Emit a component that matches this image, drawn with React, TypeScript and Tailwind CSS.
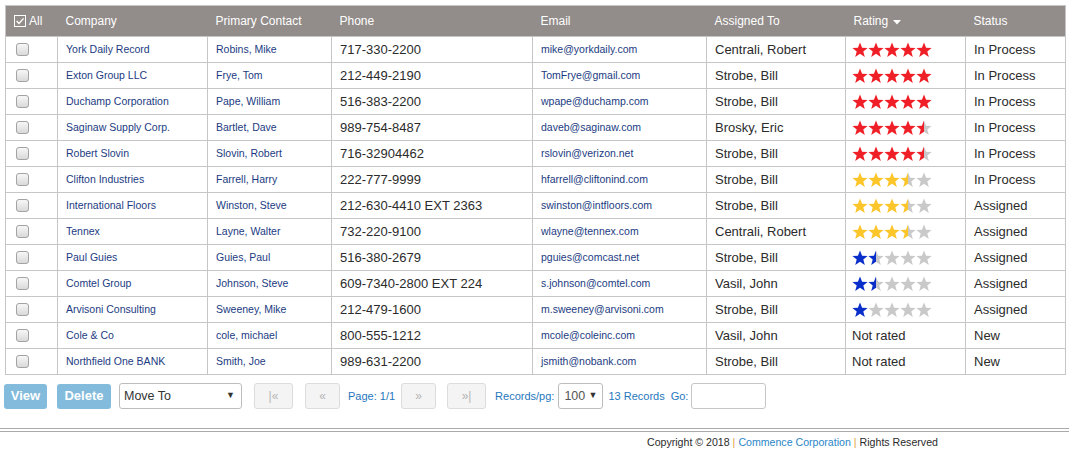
import React, { useId } from "react";

type Row = {
  company: string;
  contact: string;
  phone: string;
  email: string;
  assigned: string;
  rating: number | null;
  color: string;
  status: string;
};

const RED = "#ee1f26";
const YEL = "#fcc52a";
const BLU = "#0a2ec9";

const rows: Row[] = [
  { company: "York Daily Record", contact: "Robins, Mike", phone: "717-330-2200", email: "mike@yorkdaily.com", assigned: "Centrali, Robert", rating: 5, color: RED, status: "In Process" },
  { company: "Exton Group LLC", contact: "Frye, Tom", phone: "212-449-2190", email: "TomFrye@gmail.com", assigned: "Strobe, Bill", rating: 5, color: RED, status: "In Process" },
  { company: "Duchamp Corporation", contact: "Pape, William", phone: "516-383-2200", email: "wpape@duchamp.com", assigned: "Strobe, Bill", rating: 5, color: RED, status: "In Process" },
  { company: "Saginaw Supply Corp.", contact: "Bartlet, Dave", phone: "989-754-8487", email: "daveb@saginaw.com", assigned: "Brosky, Eric", rating: 4.5, color: RED, status: "In Process" },
  { company: "Robert Slovin", contact: "Slovin, Robert", phone: "716-32904462", email: "rslovin@verizon.net", assigned: "Strobe, Bill", rating: 4.5, color: RED, status: "In Process" },
  { company: "Clifton Industries", contact: "Farrell, Harry", phone: "222-777-9999", email: "hfarrell@cliftonind.com", assigned: "Strobe, Bill", rating: 3.5, color: YEL, status: "In Process" },
  { company: "International Floors", contact: "Winston, Steve", phone: "212-630-4410 EXT 2363", email: "swinston@intfloors.com", assigned: "Strobe, Bill", rating: 3.5, color: YEL, status: "Assigned" },
  { company: "Tennex", contact: "Layne, Walter", phone: "732-220-9100", email: "wlayne@tennex.com", assigned: "Centrali, Robert", rating: 3.5, color: YEL, status: "Assigned" },
  { company: "Paul Guies", contact: "Guies, Paul", phone: "516-380-2679", email: "pguies@comcast.net", assigned: "Strobe, Bill", rating: 1.5, color: BLU, status: "Assigned" },
  { company: "Comtel Group", contact: "Johnson, Steve", phone: "609-7340-2800 EXT 224", email: "s.johnson@comtel.com", assigned: "Vasil, John", rating: 1.5, color: BLU, status: "Assigned" },
  { company: "Arvisoni Consulting", contact: "Sweeney, Mike", phone: "212-479-1600", email: "m.sweeney@arvisoni.com", assigned: "Strobe, Bill", rating: 1, color: BLU, status: "Assigned" },
  { company: "Cole & Co", contact: "cole, michael", phone: "800-555-1212", email: "mcole@coleinc.com", assigned: "Vasil, John", rating: null, color: RED, status: "New" },
  { company: "Northfield One BANK", contact: "Smith, Joe", phone: "989-631-2200", email: "jsmith@nobank.com", assigned: "Strobe, Bill", rating: null, color: RED, status: "New" },
];

const STAR = "8,0.6 10.1,5.7 15.6,5.9 11.3,9.4 12.8,14.9 8,11.8 3.2,14.9 4.7,9.4 0.4,5.9 5.9,5.7";

function Star({ fill, color }: { fill: number; color: string }) {
  const id = useId().replace(/:/g, "");
  const pct = `${fill * 100}%`;
  return (
    <svg width="16" height="16" viewBox="0 0 16 16" className="block">
      <defs>
        <linearGradient id={id} x1="0" x2="1" y1="0" y2="0">
          <stop offset={pct} stopColor={color} />
          <stop offset={pct} stopColor="#c9c9c9" />
        </linearGradient>
      </defs>
      <polygon points={STAR} fill={`url(#${id})`} />
    </svg>
  );
}

function Stars({ rating, color }: { rating: number; color: string }) {
  return (
    <div className="flex">
      {[0, 1, 2, 3, 4].map((i) => (
        <Star key={i} fill={Math.max(0, Math.min(1, rating - i))} color={color} />
      ))}
    </div>
  );
}

function Box() {
  return (
    <div className="w-[13px] h-[13px] rounded-[3px] border border-[#a3a3a3] bg-gradient-to-b from-[#f7f7f7] to-[#d9d9d9]" />
  );
}

const th = "text-left font-normal text-white text-[12px] px-[8px] h-[31px] align-middle";
const td = "border border-[#c6c6c6] px-[8px] h-[26px] align-middle whitespace-nowrap";
const link = "text-[10.5px] text-[#1b3b82]";
const plain = "text-[13px] text-[#2b2b2b]";

export default function App() {
  return (
    <div className="w-[1069px] h-[460px] bg-white overflow-hidden" style={{ fontFamily: '"Liberation Sans", Arial, sans-serif' }}>
      <div className="pt-[5px] pl-[5px]">
        <table className="table-fixed border-collapse w-[1060px] border border-[#c6c6c6]">
          <colgroup>
            <col className="w-[52px]" />
            <col className="w-[150px]" />
            <col className="w-[124px]" />
            <col className="w-[201px]" />
            <col className="w-[174px]" />
            <col className="w-[139px]" />
            <col className="w-[120px]" />
            <col className="w-[100px]" />
          </colgroup>
          <thead>
            <tr className="bg-[#928c8a]">
              <th className={th + " pl-[8px]"}>
                <div className="flex items-center gap-[3px]">
                  <svg width="12" height="12" viewBox="0 0 12 12" className="block">
                    <rect x="0.5" y="0.5" width="11" height="11" fill="none" stroke="#fff" />
                    <path d="M2.6 6 L5 8.4 L9.6 3.4" fill="none" stroke="#fff" strokeWidth="1.4" />
                  </svg>
                  <span>All</span>
                </div>
              </th>
              <th className={th}>Company</th>
              <th className={th}>Primary Contact</th>
              <th className={th}>Phone</th>
              <th className={th}>Email</th>
              <th className={th}>Assigned To</th>
              <th className={th}>
                <div className="flex items-center gap-[5px]">
                  <span>Rating</span>
                  <svg width="8" height="5" viewBox="0 0 8 5" className="block mt-[2px]">
                    <polygon points="0,0 8,0 4,4.5" fill="#fff" />
                  </svg>
                </div>
              </th>
              <th className={th}>Status</th>
            </tr>
          </thead>
          <tbody>
            {rows.map((r, i) => (
              <tr key={i}>
                <td className={td + " pl-[10px]"}>
                  <Box />
                </td>
                <td className={td + " " + link}>{r.company}</td>
                <td className={td + " " + link}>{r.contact}</td>
                <td className={td + " " + plain}>{r.phone}</td>
                <td className={td + " " + link}>{r.email}</td>
                <td className={td + " " + plain}>{r.assigned}</td>
                <td className={td + " pl-[6px] " + plain}>
                  {r.rating === null ? <span>Not rated</span> : <Stars rating={r.rating} color={r.color} />}
                </td>
                <td className={td + " " + plain}>{r.status}</td>
              </tr>
            ))}
          </tbody>
        </table>
      </div>

      <div className="flex items-center h-[26px] mt-[8px] pl-[4px] text-[11px]">
        <button className="h-[25px] w-[43px] rounded-[3px] bg-[#82bbdb] text-white text-[13px] font-bold">View</button>
        <button className="h-[25px] w-[54px] ml-[10px] rounded-[3px] bg-[#82bbdb] text-white text-[13px] font-bold">Delete</button>
        <div className="h-[26px] w-[123px] ml-[8px] rounded-[3px] border border-[#bdbdbd] bg-white flex items-center justify-between pl-[4px] pr-[6px]">
          <span className="text-[12.5px] text-[#333]">Move To</span>
          <span className="text-[9px] text-[#333]">▼</span>
        </div>
        <div className="h-[26px] w-[39px] ml-[12px] rounded-[3px] border border-[#dcdcdc] bg-[#f4f4f4] flex items-center justify-center text-[#b4b4b4] text-[12px]">|«</div>
        <div className="h-[26px] w-[35px] ml-[12px] rounded-[3px] border border-[#dcdcdc] bg-[#f4f4f4] flex items-center justify-center text-[#b4b4b4] text-[12px]">«</div>
        <span className="ml-[8px] text-[#1f77bd]">Page: 1/1</span>
        <div className="h-[26px] w-[35px] ml-[6px] rounded-[3px] border border-[#dcdcdc] bg-[#f4f4f4] flex items-center justify-center text-[#b4b4b4] text-[12px]">»</div>
        <div className="h-[26px] w-[39px] ml-[11px] rounded-[3px] border border-[#dcdcdc] bg-[#f4f4f4] flex items-center justify-center text-[#b4b4b4] text-[12px]">»|</div>
        <span className="ml-[9px] text-[#1f77bd]">Records/pg:</span>
        <div className="h-[26px] w-[45px] ml-[4px] rounded-[3px] border border-[#bdbdbd] bg-white flex items-center justify-between pl-[5px] pr-[5px]">
          <span className="text-[12.5px] text-[#555]">100</span>
          <span className="text-[9px] text-[#333]">▼</span>
        </div>
        <span className="ml-[5px] text-[#1f77bd]">13 Records</span>
        <span className="ml-[6px] text-[#1f77bd]">Go:</span>
        <div className="h-[26px] w-[75px] ml-[3px] rounded-[3px] border border-[#c6c6c6] bg-white" />
      </div>

      <div className="mt-[19px] h-[4px] border-t border-b border-[#aaaaaa]" />
      <div className="flex pl-[647px] pt-[3px] text-[10.6px] text-[#2b2b2b]">
        <span>Copyright © 2018</span>
        <span className="text-[#e2a13a] px-[3px]">|</span>
        <span className="text-[#2a86c8]">Commence Corporation</span>
        <span className="text-[#e2a13a] px-[3px]">|</span>
        <span>Rights Reserved</span>
      </div>
    </div>
  );
}
